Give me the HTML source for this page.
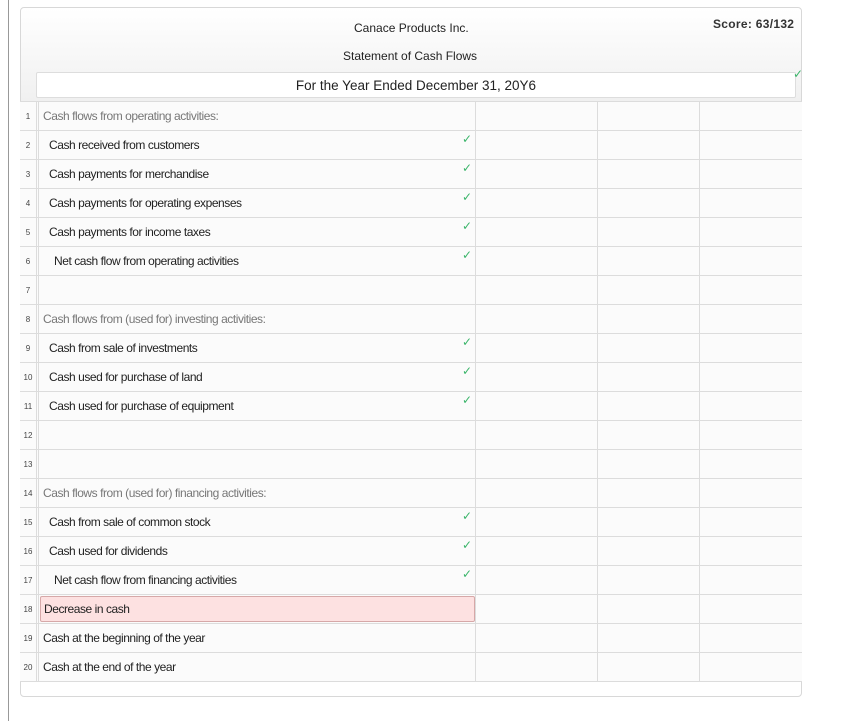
<!DOCTYPE html>
<html><head><meta charset="utf-8"><style>
*{margin:0;padding:0;box-sizing:border-box}
body{width:858px;height:721px;background:#fff;position:relative;overflow:hidden;font-family:"Liberation Sans",sans-serif}
.vl{position:absolute;left:8px;top:0;width:1px;height:721px;background:#999}
.box{position:absolute;left:20px;top:7px;width:782px;height:690px;border:1px solid #d8d8d8;border-radius:4px;background:#fff}
.hdr{position:absolute;left:21px;top:8px;width:780px;height:94px;background:linear-gradient(#fff,#f0f0f0);border-radius:4px 4px 0 0}
.t{position:absolute;font-size:12px;color:#222;white-space:nowrap}
.date{position:absolute;left:36px;top:72px;width:760px;height:26px;background:#fff;border:1px solid #ddd;border-radius:2px;font-size:13.5px;text-align:center;line-height:25px;color:#222}
.row{position:absolute;left:20px;width:782px;height:29px;border-bottom:1px solid #dcdcdc;background:#fbfbfb}
.n{position:absolute;left:0;top:0;height:29px;font-size:8px;color:#444;text-align:center;line-height:29px;border-right:3px double #dcdcdc;width:19px}
.c{position:absolute;top:0;height:29px;border-left:1px solid #dcdcdc}
.lb{position:absolute;top:0;line-height:29px;font-size:12px;letter-spacing:-0.45px;color:#222;white-space:nowrap}
.g{color:#777}
.ck{position:absolute;left:442px;top:1px;font-size:12px;color:#3bb56a}
.pink{position:absolute;left:20px;top:1px;width:435px;height:26px;background:#fde1e1;border:1px solid #d6a8a8;border-radius:2px}
</style></head><body>
<div class="vl"></div>
<div class="box"></div>
<div class="hdr"></div>
<div class="t" style="left:354px;top:21px">Canace Products Inc.</div>
<div class="t" style="left:343px;top:49px">Statement of Cash Flows</div>
<div class="t" style="left:713px;top:17px;font-size:12px;letter-spacing:0.3px;font-weight:bold;color:#333">Score: 63/132</div>
<div class="date">For the Year Ended December 31, 20Y6</div>
<div class="t" style="left:793px;top:67px;font-size:12px;color:#3bb56a">✓</div>

<div class="row" style="top:101px;border-top:1px solid #dcdcdc;height:30px"><div class="n">1</div><div class="lb g" style="left:23px">Cash flows from operating activities:</div><div class="c" style="left:455px"></div><div class="c" style="left:577px"></div><div class="c" style="left:679px"></div></div>
<div class="row" style="top:131px"><div class="n">2</div><div class="lb" style="left:29px">Cash received from customers</div><div class="ck">✓</div><div class="c" style="left:455px"></div><div class="c" style="left:577px"></div><div class="c" style="left:679px"></div></div>
<div class="row" style="top:160px"><div class="n">3</div><div class="lb" style="left:29px">Cash payments for merchandise</div><div class="ck">✓</div><div class="c" style="left:455px"></div><div class="c" style="left:577px"></div><div class="c" style="left:679px"></div></div>
<div class="row" style="top:189px"><div class="n">4</div><div class="lb" style="left:29px">Cash payments for operating expenses</div><div class="ck">✓</div><div class="c" style="left:455px"></div><div class="c" style="left:577px"></div><div class="c" style="left:679px"></div></div>
<div class="row" style="top:218px"><div class="n">5</div><div class="lb" style="left:29px">Cash payments for income taxes</div><div class="ck">✓</div><div class="c" style="left:455px"></div><div class="c" style="left:577px"></div><div class="c" style="left:679px"></div></div>
<div class="row" style="top:247px"><div class="n">6</div><div class="lb" style="left:34px">Net cash flow from operating activities</div><div class="ck">✓</div><div class="c" style="left:455px"></div><div class="c" style="left:577px"></div><div class="c" style="left:679px"></div></div>
<div class="row" style="top:276px"><div class="n">7</div><div class="c" style="left:455px"></div><div class="c" style="left:577px"></div><div class="c" style="left:679px"></div></div>
<div class="row" style="top:305px"><div class="n">8</div><div class="lb g" style="left:23px">Cash flows from (used for) investing activities:</div><div class="c" style="left:455px"></div><div class="c" style="left:577px"></div><div class="c" style="left:679px"></div></div>
<div class="row" style="top:334px"><div class="n">9</div><div class="lb" style="left:29px">Cash from sale of investments</div><div class="ck">✓</div><div class="c" style="left:455px"></div><div class="c" style="left:577px"></div><div class="c" style="left:679px"></div></div>
<div class="row" style="top:363px"><div class="n">10</div><div class="lb" style="left:29px">Cash used for purchase of land</div><div class="ck">✓</div><div class="c" style="left:455px"></div><div class="c" style="left:577px"></div><div class="c" style="left:679px"></div></div>
<div class="row" style="top:392px"><div class="n">11</div><div class="lb" style="left:29px">Cash used for purchase of equipment</div><div class="ck">✓</div><div class="c" style="left:455px"></div><div class="c" style="left:577px"></div><div class="c" style="left:679px"></div></div>
<div class="row" style="top:421px"><div class="n">12</div><div class="c" style="left:455px"></div><div class="c" style="left:577px"></div><div class="c" style="left:679px"></div></div>
<div class="row" style="top:450px"><div class="n">13</div><div class="c" style="left:455px"></div><div class="c" style="left:577px"></div><div class="c" style="left:679px"></div></div>
<div class="row" style="top:479px"><div class="n">14</div><div class="lb g" style="left:23px">Cash flows from (used for) financing activities:</div><div class="c" style="left:455px"></div><div class="c" style="left:577px"></div><div class="c" style="left:679px"></div></div>
<div class="row" style="top:508px"><div class="n">15</div><div class="lb" style="left:29px">Cash from sale of common stock</div><div class="ck">✓</div><div class="c" style="left:455px"></div><div class="c" style="left:577px"></div><div class="c" style="left:679px"></div></div>
<div class="row" style="top:537px"><div class="n">16</div><div class="lb" style="left:29px">Cash used for dividends</div><div class="ck">✓</div><div class="c" style="left:455px"></div><div class="c" style="left:577px"></div><div class="c" style="left:679px"></div></div>
<div class="row" style="top:566px"><div class="n">17</div><div class="lb" style="left:34px">Net cash flow from financing activities</div><div class="ck">✓</div><div class="c" style="left:455px"></div><div class="c" style="left:577px"></div><div class="c" style="left:679px"></div></div>
<div class="row" style="top:595px"><div class="n">18</div><div class="pink"></div><div class="lb" style="left:24px">Decrease in cash</div><div class="c" style="left:455px"></div><div class="c" style="left:577px"></div><div class="c" style="left:679px"></div></div>
<div class="row" style="top:624px"><div class="n">19</div><div class="lb" style="left:23px">Cash at the beginning of the year</div><div class="c" style="left:455px"></div><div class="c" style="left:577px"></div><div class="c" style="left:679px"></div></div>
<div class="row" style="top:653px"><div class="n">20</div><div class="lb" style="left:23px">Cash at the end of the year</div><div class="c" style="left:455px"></div><div class="c" style="left:577px"></div><div class="c" style="left:679px"></div></div>
</body></html>
